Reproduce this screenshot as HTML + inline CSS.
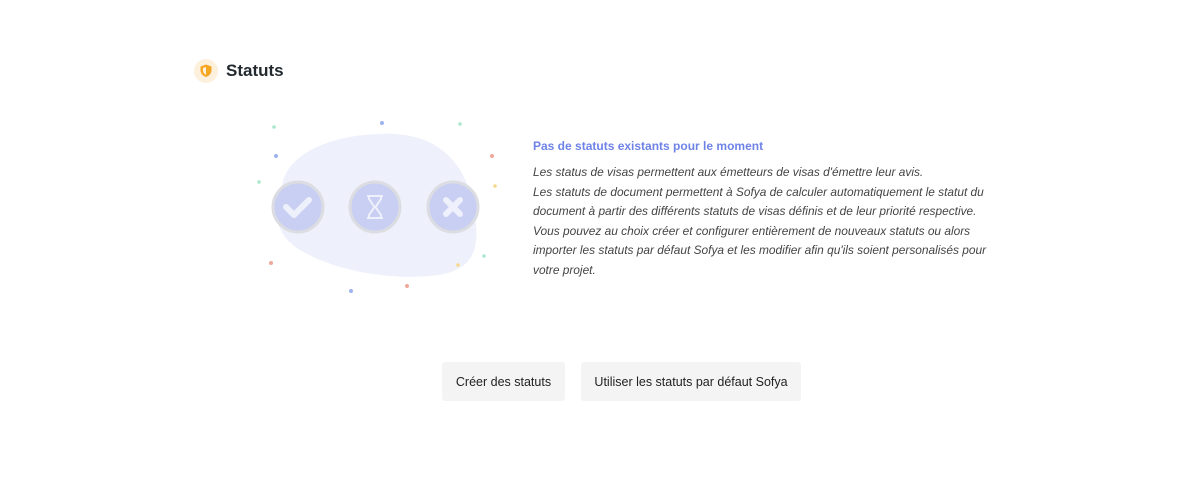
<!DOCTYPE html>
<html><head><meta charset="utf-8"><style>
body{margin:0;width:1192px;height:478px;background:#fff;font-family:"Liberation Sans",sans-serif;position:relative;overflow:hidden}
.ic{position:absolute;left:194px;top:59px;width:24px;height:24px;border-radius:50%;background:#fdf0dc}
h1{position:absolute;left:226px;top:61px;margin:0;font-size:17px;font-weight:bold;color:#222a30}
.t{position:absolute;left:533px;top:139px;font-size:12px;font-weight:bold;color:#6f83e6}
.p{position:absolute;left:533px;top:163px;font-size:11.9px;font-style:italic;color:#444;line-height:19.5px;white-space:nowrap}
.b{position:absolute;top:362px;height:39px;background:#f4f4f5;border-radius:3px;font-size:12.5px;color:#222;display:flex;align-items:center;justify-content:center}
</style></head><body>
<div class="ic"><svg width="24" height="24" viewBox="0 0 24 24"><path d="M12 5.5l5.5 2v3.8c0 3.3-2.4 5.7-5.5 6.7-3.1-1-5.5-3.4-5.5-6.7V7.5z" fill="#f5a623"/><path d="M12 8v7.8c-1.7-.7-3-2.3-3-4.3V9z" fill="#fdf0dc"/></svg></div>
<h1>Statuts</h1>
<svg style="position:absolute;left:0;top:0" width="1192" height="478">
<path d="M282 185 C290 145 350 132 395 134 C445 137 468 170 474 210 C480 245 478 272 430 276 C380 280 330 268 300 250 C270 232 276 205 282 185Z" fill="#eef0fb"/>
<g fill="#c8cff2" stroke="#dcdde2" stroke-width="3">
<circle cx="298" cy="207" r="25"/><circle cx="375" cy="207" r="25"/><circle cx="453" cy="207" r="25"/></g>
<path d="M286 207l8 8 15-15" fill="none" stroke="#eef0fb" stroke-width="6" stroke-linecap="round" stroke-linejoin="round"/>
<path d="M446 200l14 14M460 200l-14 14" stroke="#eef0fb" stroke-width="6" stroke-linecap="round"/>
<path d="M367 196h16M367 218h16M369 196v3l5.5 8-5.5 8v3M381 196v3l-5.5 8 5.5 8v3" fill="none" stroke="#eef0fb" stroke-width="2"/>
<g>
<circle cx="274" cy="127" r="1.8" fill="#a8e8cc"/><circle cx="276" cy="156" r="2" fill="#9db3f0"/><circle cx="259" cy="182" r="1.8" fill="#a8e8cc"/>
<circle cx="382" cy="123" r="2" fill="#9db3f0"/><circle cx="460" cy="124" r="1.8" fill="#a8e8cc"/><circle cx="492" cy="156" r="2" fill="#f0a89a"/>
<circle cx="495" cy="186" r="1.8" fill="#f5d98a"/><circle cx="484" cy="256" r="1.8" fill="#a8e8cc"/><circle cx="458" cy="265" r="1.8" fill="#f5d98a"/>
<circle cx="271" cy="263" r="2" fill="#f0a89a"/><circle cx="351" cy="291" r="2" fill="#9db3f0"/><circle cx="407" cy="286" r="2" fill="#f0a89a"/>
</g></svg>
<div class="t">Pas de statuts existants pour le moment</div>
<div class="p">Les status de visas permettent aux émetteurs de visas d'émettre leur avis.<br>Les statuts de document permettent à Sofya de calculer automatiquement le statut du<br>document à partir des différents statuts de visas définis et de leur priorité respective.<br>Vous pouvez au choix créer et configurer entièrement de nouveaux statuts ou alors<br>importer les statuts par défaut Sofya et les modifier afin qu'ils soient personalisés pour<br>votre projet.</div>
<div class="b" style="left:442px;width:123px">Créer des statuts</div>
<div class="b" style="left:581px;width:220px">Utiliser les statuts par défaut Sofya</div>
</body></html>
